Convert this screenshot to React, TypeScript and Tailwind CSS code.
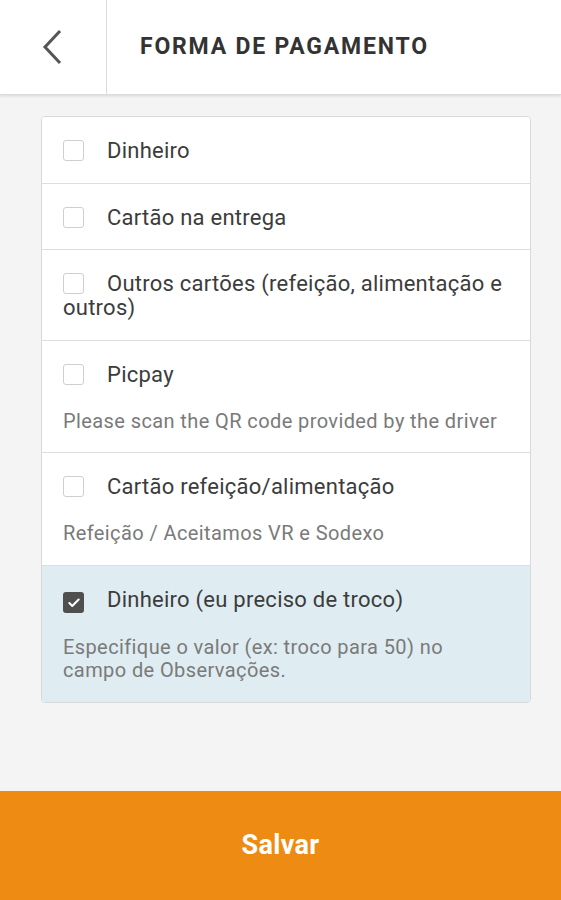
import { Check } from "lucide-react";

type Option = {
  label: string;
  hint?: string;
  checked?: boolean;
};

const options: Option[] = [
  { label: "Dinheiro" },
  { label: "Cartão na entrega" },
  { label: "Outros cartões (refeição, alimentação e outros)" },
  { label: "Picpay", hint: "Please scan the QR code provided by the driver" },
  { label: "Cartão refeição/alimentação", hint: "Refeição / Aceitamos VR e Sodexo" },
  {
    label: "Dinheiro (eu preciso de troco)",
    hint: "Especifique o valor (ex: troco para 50) no campo de Observações.",
    checked: true,
  },
];

const Checkbox = ({ checked }: { checked?: boolean }) =>
  checked ? (
    <span className="inline-flex items-center justify-center align-[-3px] w-[21px] h-[21px] rounded-[3px] bg-[#4f4f4f] mr-[23px]">
      <Check className="w-[14px] h-[14px] text-white" strokeWidth={3.5} />
    </span>
  ) : (
    <span className="inline-block align-[-3px] w-[21px] h-[21px] rounded-[3px] border border-[#cfcfcf] bg-white mr-[23px]" />
  );

export default function App() {
  return (
    <div className="flex flex-col h-[900px] bg-[#f4f4f4] font-['Roboto',sans-serif]">
      <header className="flex h-[95px] shrink-0 bg-white border-b border-[#dcdcdc] shadow-[0_1px_3px_rgba(0,0,0,0.12)]">
        <button className="w-[107px] flex items-center justify-center border-r border-[#dcdcdc] pr-[3px]">
          <svg width="22" height="36" viewBox="0 0 22 36" fill="none" stroke="#555" strokeWidth="3">
            <path d="M19 2 L4 18 L19 34" />
          </svg>
        </button>
        <h1 className="flex items-center pl-[33px] text-[23px] font-bold text-[#333] tracking-[1.8px]">
          FORMA DE PAGAMENTO
        </h1>
      </header>

      <main className="flex-1 pt-[21px]">
        <div className="ml-[41px] w-[490px] border border-[#d9d9d9] rounded-[4px] overflow-hidden bg-white">
          {options.map((o, i) => (
            <div
              key={i}
              className={`px-[21px] pt-[22px] pb-[19.5px] ${i > 0 ? "border-t border-[#dedede]" : ""} ${
                o.checked ? "bg-[#dfecf1]" : "bg-white"
              }`}
            >
              <div className="text-[22px] leading-[24px] tracking-[0.25px] text-[#3c3c3c]">
                <Checkbox checked={o.checked} />
                {o.label}
              </div>
              {o.hint && (
                <p className="mt-[23px] pr-[8px] text-[20px] leading-[23px] tracking-[0.4px] text-[#7a7a7a]">
                  {o.hint}
                </p>
              )}
            </div>
          ))}
        </div>
      </main>

      <button className="h-[109px] shrink-0 bg-[#ee8b13] text-white text-[27px] font-bold tracking-[0.3px]">
        Salvar
      </button>
    </div>
  );
}
